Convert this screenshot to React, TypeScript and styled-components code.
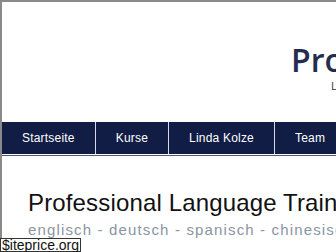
import React from 'react';
import styled, { createGlobalStyle } from 'styled-components';

const GlobalStyle = createGlobalStyle`
  html, body {
    margin: 0;
    padding: 0;
    background: #ffffff;
    overflow: hidden;
  }
`;

const Page = styled.div`
  width: 1000px;
  min-height: 252px;
  border-left: 2px solid #8a8a8a;
  border-top: 2px solid #8a8a8a;
  background: #ffffff;
  font-family: 'Liberation Sans', Arial, sans-serif;
`;

const Header = styled.header`
  height: 120px;
  display: flex;
  padding-left: 289px;
  box-sizing: border-box;
`;

const Logo = styled.div`
  display: flex;
  flex-direction: column;
  padding-top: 39px;
`;

const LogoTitle = styled.div`
  font-family: 'Open Sans', sans-serif;
  font-weight: 600;
  font-size: 32px;
  line-height: 38px;
  color: #262c4d;
  white-space: nowrap;
`;

const LogoSub = styled.div`
  font-family: 'Open Sans', sans-serif;
  font-size: 11px;
  line-height: 14px;
  color: #333;
  padding-left: 40px;
  white-space: nowrap;
`;

const Nav = styled.nav`
  display: flex;
  height: 32px;
  background: #111d45;
  border-bottom: 1px solid #ffffff;
`;

const NavItem = styled.a`
  display: block;
  padding: 0 20px;
  line-height: 32px;
  font-size: 12px;
  letter-spacing: 0.2px;
  color: #ffffff;
  text-decoration: none;
  border-right: 1px solid #d6dae4;
  white-space: nowrap;
`;

const NavRule = styled.div`
  height: 1px;
  background: #4f5a74;
`;

const Content = styled.main`
  padding: 33px 0 0 26px;
`;

const Heading = styled.h1`
  margin: 0;
  font-size: 24px;
  font-weight: 400;
  letter-spacing: 0.15px;
  color: #111111;
  white-space: nowrap;
`;

const Languages = styled.div`
  margin-top: 4px;
  font-size: 15px;
  letter-spacing: 1.15px;
  color: #8a95a3;
  white-space: nowrap;
`;

const Watermark = styled.div`
  position: absolute;
  left: 0;
  bottom: 0;
  padding: 0 1px;
  background: #ffffff;
  border: 1px solid #333;
  font-family: 'Liberation Sans', Arial, sans-serif;
  font-size: 14px;
  line-height: 12px;
  color: #111;
`;

const navItems = ['Startseite', 'Kurse', 'Linda Kolze', 'Team', 'Kontakt', 'Impressum'];

const App: React.FC = () => (
  <>
    <GlobalStyle />
    <Page>
      <Header>
        <Logo>
          <LogoTitle>Professional Language Training</LogoTitle>
          <LogoSub>Linda Kolze</LogoSub>
        </Logo>
      </Header>
      <Nav>
        {navItems.map((item) => (
          <NavItem key={item} href="#">
            {item}
          </NavItem>
        ))}
      </Nav>
      <NavRule />
      <Content>
        <Heading>Professional Language Training</Heading>
        <Languages>englisch - deutsch - spanisch - chinesisch - französisch</Languages>
      </Content>
    </Page>
    <Watermark>$iteprice.org</Watermark>
  </>
);

export default App;
